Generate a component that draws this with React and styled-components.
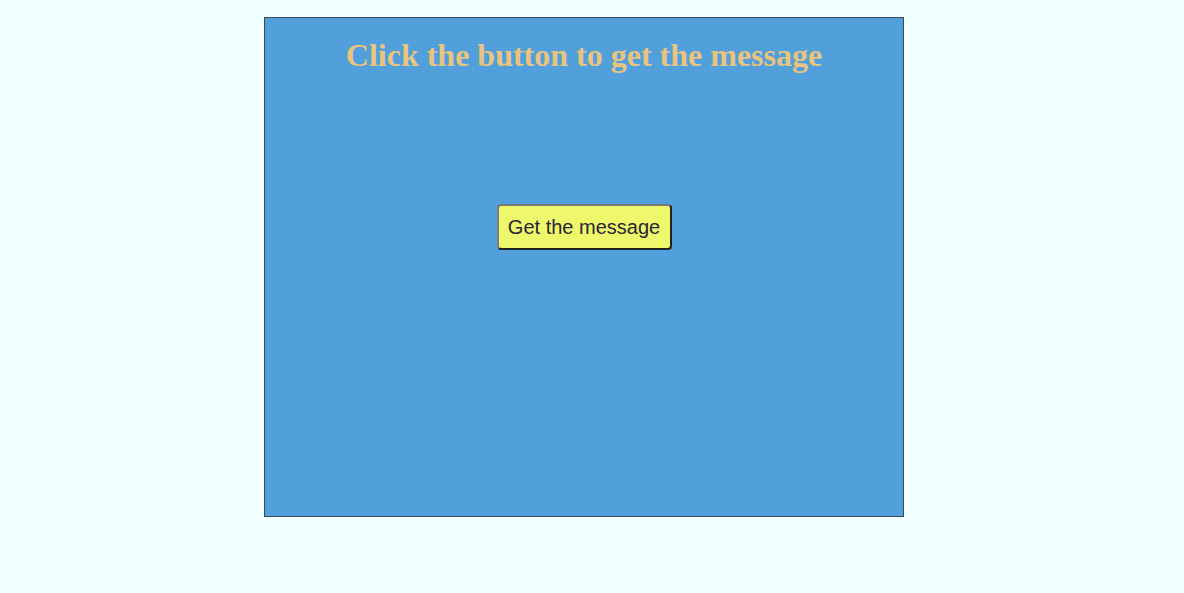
import React from "react";
import styled, { createGlobalStyle } from "styled-components";

const GlobalStyle = createGlobalStyle`
    html, body {
        margin: 0;
        background: #f0ffff;
    }
    body {
        padding: 17px 16px 0 0;
        font-family: "Liberation Serif", "Times New Roman", serif;
    }
`;

const Panel = styled.div`
    box-sizing: border-box;
    width: 640px;
    height: 500px;
    margin: 0 auto;
    background: #519fdb;
    border: 1px solid #3b4a55;
    display: flex;
    flex-direction: column;
    align-items: center;
`;

const Title = styled.h1`
    margin: 19px 0 0;
    font-family: "Liberation Serif", "Times New Roman", serif;
    font-size: 32px;
    font-weight: bold;
    line-height: 36px;
    color: #e9c47f;
`;

const MessageButton = styled.button`
    margin-top: 131px;
    box-sizing: border-box;
    width: 175px;
    height: 46px;
    padding: 0 8px;
    font-family: "Liberation Sans", Arial, sans-serif;
    font-size: 20px;
    color: #2a2433;
    background: #eff76b;
    border: 2px solid;
    border-color: #7a7a7a #222 #222 #7a7a7a;
    border-radius: 4px;
    cursor: pointer;
`;

function App() {
    return (
        <>
            <GlobalStyle />
            <Panel>
                <Title>Click the button to get the message</Title>
                <MessageButton>Get the message</MessageButton>
            </Panel>
        </>
    );
}

export default App;
